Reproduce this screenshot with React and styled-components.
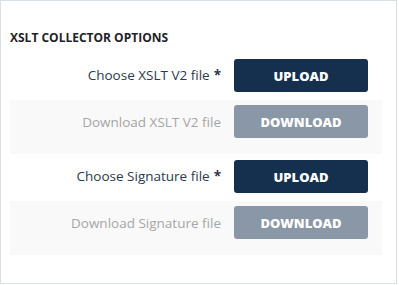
import React from "react";
import styled, { createGlobalStyle, css } from "styled-components";

const GlobalStyle = createGlobalStyle`
  html, body {
    margin: 0;
    padding: 0;
    background: #ffffff;
    font-family: "Open Sans", "Liberation Sans", sans-serif;
  }
`;

const rows = [
  { id: "xslt-up", label: "Choose XSLT V2 file", required: true, action: "Upload" },
  { id: "xslt-down", label: "Download XSLT V2 file", disabled: true, action: "Download" },
  { id: "sig-up", label: "Choose Signature file", required: true, action: "Upload" },
  { id: "sig-down", label: "Download Signature file", disabled: true, action: "Download" },
];

function App() {
  return (
    <>
      <GlobalStyle />
      <Card>
        <Heading>XSLT Collector Options</Heading>
        {rows.map(row => (
          <Row key={row.id} disabled={row.disabled}>
            <Label disabled={row.disabled}>
              {row.label}
              {row.required && <Star>*</Star>}
            </Label>
            <Button disabled={row.disabled}>{row.action}</Button>
          </Row>
        ))}
      </Card>
    </>
  );
}

const Card = styled.div`
  box-sizing: border-box;
  width: 397px;
  height: 284px;
  border: 1px solid #d8dfe7;
  padding: 27px 14px 0 9px;
`;

const Heading = styled.div`
  font-size: 12px;
  font-weight: 700;
  line-height: 20px;
  color: #1f2329;
  text-transform: uppercase;
  margin-bottom: 11px;
`;

const Row = styled.div`
  display: grid;
  grid-template-columns: 1fr 134px;
  column-gap: 13px;
  align-items: center;
  padding: 0 14px 0 0;
  margin-bottom: 8px;
  ${props =>
    props.disabled &&
    css`
      background: #f9f9f9;
      padding: 5px 14px 16px 0;
      margin-bottom: 6px;
    `}
`;

const Label = styled.div`
  text-align: right;
  font-size: 13.5px;
  color: ${props => (props.disabled ? "#a6a6a6" : "#2a3a4c")};
  padding-bottom: ${props => (props.disabled ? "0" : "2px")};
`;

const Star = styled.span`
  margin-left: 4px;
  font-weight: 700;
  color: #2a3a4c;
`;

const Button = styled.button`
  height: 33px;
  border: none;
  border-radius: 3px;
  background: ${props => (props.disabled ? "#8a97a6" : "#15304f")};
  color: #ffffff;
  font-family: "Open Sans", "Liberation Sans", sans-serif;
  font-size: 13px;
  font-weight: 800;
  text-transform: uppercase;
  cursor: ${props => (props.disabled ? "default" : "pointer")};
`;

export default App;
